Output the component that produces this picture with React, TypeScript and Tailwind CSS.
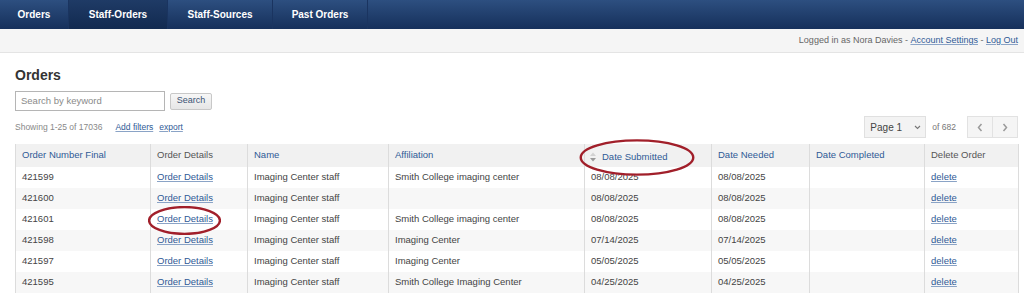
import React from 'react';

const tabs = [
  { label: 'Orders', w: 'w-[69px]', active: false },
  { label: 'Staff-Orders', w: 'w-[99px]', active: true },
  { label: 'Staff-Sources', w: 'w-[105px]', active: false },
  { label: 'Past Orders', w: 'w-[95px]', active: false },
];

const rows = [
  { id: '421599', name: 'Imaging Center staff', aff: 'Smith College imaging center', sub: '08/08/2025', need: '08/08/2025' },
  { id: '421600', name: 'Imaging Center staff', aff: '', sub: '08/08/2025', need: '08/08/2025' },
  { id: '421601', name: 'Imaging Center staff', aff: 'Smith College imaging center', sub: '08/08/2025', need: '08/08/2025' },
  { id: '421598', name: 'Imaging Center staff', aff: 'Imaging Center', sub: '07/14/2025', need: '07/14/2025' },
  { id: '421597', name: 'Imaging Center staff', aff: 'Imaging Center', sub: '05/05/2025', need: '05/05/2025' },
  { id: '421595', name: 'Imaging Center staff', aff: 'Smith College Imaging Center', sub: '04/25/2025', need: '04/25/2025' },
];

// Red hand-drawn style circle laid over the screenshot
function Ring({ className }: { className: string }) {
  return (
    <svg className={`pointer-events-none absolute ${className}`} viewBox="0 0 100 40" preserveAspectRatio="none">
      <ellipse cx="50" cy="20" rx="48.5" ry="18.5" fill="none" stroke="#a11f2a" strokeWidth="2.4" vectorEffect="non-scaling-stroke" />
    </svg>
  );
}

function SortIcon() {
  return (
    <svg width="6" height="10" viewBox="0 0 6 10" className="shrink-0">
      <path d="M3 0.5 L6 4 L0 4 Z" fill="#d2d2d2" />
      <path d="M0 6 L6 6 L3 9.5 Z" fill="#9a9a9a" />
    </svg>
  );
}

export default function App() {
  const th = 'h-[23px] border-r border-[#dcdcdc] px-[6px] text-left font-normal align-middle';
  const td = 'h-[21px] border-r border-[#dcdcdc] px-[6px] align-middle';
  const link = 'text-[#2f5a96] underline decoration-[#8aa3c6] underline-offset-[1px]';

  return (
    <div className="h-[295px] w-[1024px] overflow-hidden bg-white font-['Liberation_Sans',Arial,sans-serif] text-[#444]">
      {/* Top nav */}
      <div className="flex h-[29px] bg-gradient-to-b from-[#2d4f80] to-[#16305b]">
        {tabs.map((t) => (
          <div
            key={t.label}
            className={`flex ${t.w} items-center justify-center border-r border-[#1a3460] text-[10px] font-bold text-white ${
              t.active ? 'bg-gradient-to-b from-[#1f3b66] to-[#122a50]' : ''
            }`}
          >
            {t.label}
          </div>
        ))}
      </div>

      {/* User bar */}
      <div className="flex h-[24px] items-center justify-end border-b border-[#e4e4e4] bg-[#f5f5f5] pr-[6px] text-[9px] text-[#666]">
        Logged in as Nora Davies -&nbsp;<span className={link}>Account Settings</span>&nbsp;-&nbsp;<span className={link}>Log Out</span>
      </div>

      <div className="pl-[15px] pr-[6px]">
        <h1 className="mt-[14px] h-[17px] text-[14px] font-bold leading-[17px] text-[#333]">Orders</h1>

        <div className="mt-[7px] flex items-center gap-[5px]">
          <div className="flex h-[20px] w-[150px] items-center border border-[#b5b5b5] px-[5px] text-[9.5px] text-[#8a8a8a]">
            Search by keyword
          </div>
          <div className="flex h-[17px] w-[42px] items-center justify-center rounded-[2px] border border-[#c8c8c8] bg-gradient-to-b from-[#f7f7f7] to-[#e6e6e6] text-[9px] text-[#3b5274]">
            Search
          </div>
        </div>

        <div className="mt-[5px] flex h-[22px] items-center justify-between">
          <div className="flex items-center text-[8.5px] text-[#888]">
            <span>Showing 1-25 of 17036</span>
            <span className={`ml-[13px] ${link}`}>Add filters</span>
            <span className={`ml-[6px] ${link}`}>export</span>
          </div>
          <div className="flex items-center">
            <div className="flex h-[22px] w-[62px] items-center justify-between border border-[#e0e0e0] bg-[#f3f3f3] pl-[5px] pr-[4px] text-[10px] text-[#444]">
              <span>Page 1</span>
              <svg width="7" height="5" viewBox="0 0 7 5">
                <path d="M1 1 L3.5 3.5 L6 1" fill="none" stroke="#777" strokeWidth="1.1" />
              </svg>
            </div>
            <span className="ml-[6px] text-[8.5px] text-[#777]">of 682</span>
            <div className="ml-[11px] flex h-[22px] border border-[#e2e2e2] bg-[#f5f5f5]">
              <div className="flex w-[25px] items-center justify-center border-r border-[#e2e2e2]">
                <svg width="6" height="9" viewBox="0 0 6 9">
                  <path d="M4.5 1 L1.5 4.5 L4.5 8" fill="none" stroke="#9a9a9a" strokeWidth="1.5" />
                </svg>
              </div>
              <div className="flex w-[24px] items-center justify-center">
                <svg width="6" height="9" viewBox="0 0 6 9">
                  <path d="M1.5 1 L4.5 4.5 L1.5 8" fill="none" stroke="#9a9a9a" strokeWidth="1.5" />
                </svg>
              </div>
            </div>
          </div>
        </div>

        {/* Orders table */}
        <table className="mt-[6px] w-full table-fixed border-collapse border-l border-[#dcdcdc] text-[9.5px]">
          <colgroup>
            <col className="w-[135px]" />
            <col className="w-[97px]" />
            <col className="w-[141px]" />
            <col className="w-[196px]" />
            <col className="w-[127px]" />
            <col className="w-[98px]" />
            <col className="w-[115px]" />
            <col className="w-[94px]" />
          </colgroup>
          <thead>
            <tr className="bg-[#f1f1f1] text-[#2f5a96]">
              <th className={th}>Order Number Final</th>
              <th className={`${th} text-[#555]`}>Order Details</th>
              <th className={th}>Name</th>
              <th className={th}>Affiliation</th>
              <th className={`${th} relative pl-[5px]`}>
                <div className="mt-[3px] flex items-center gap-[6px]">
                  <SortIcon />
                  <span>Date Submitted</span>
                </div>
                <Ring className="-left-[6px] -top-[5px] h-[37px] w-[116px]" />
              </th>
              <th className={th}>Date Needed</th>
              <th className={th}>Date Completed</th>
              <th className={`${th} text-[#555]`}>Delete Order</th>
            </tr>
          </thead>
          <tbody>
            {rows.map((r, i) => (
              <tr key={r.id} className={i % 2 === 1 ? 'bg-[#f7f7f7]' : 'bg-white'}>
                <td className={td}>{r.id}</td>
                <td className={`${td} relative`}>
                  <span className={link}>Order Details</span>
                  {r.id === '421601' && <Ring className="-left-[3px] -top-[3px] h-[29px] w-[73px]" />}
                </td>
                <td className={td}>{r.name}</td>
                <td className={td}>{r.aff}</td>
                <td className={td}>{r.sub}</td>
                <td className={td}>{r.need}</td>
                <td className={td}></td>
                <td className={td}>
                  <span className={link}>delete</span>
                </td>
              </tr>
            ))}
          </tbody>
        </table>
      </div>
    </div>
  );
}
